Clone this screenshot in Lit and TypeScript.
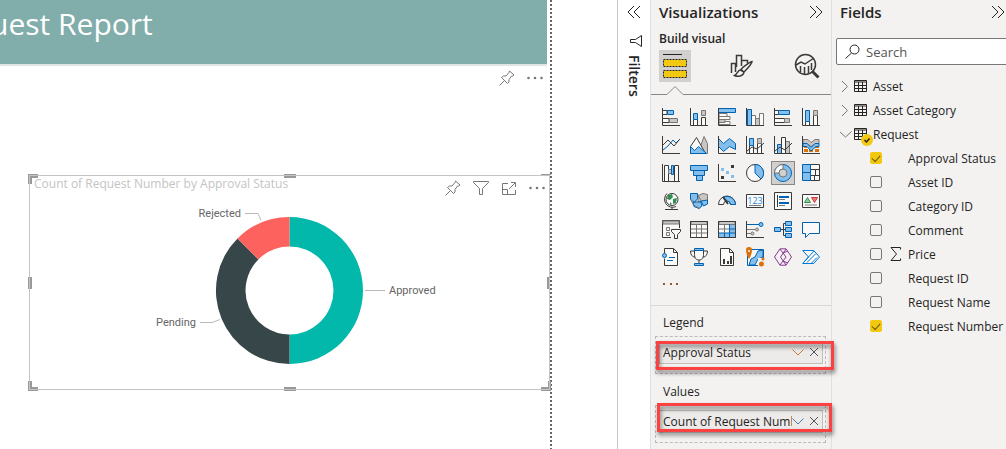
import { LitElement, html, svg, css } from "lit";
import { customElement, property, state } from "lit/decorators.js";
import { classMap } from "lit/directives/class-map.js";

const axes = svg`<path class="k" d="M.5 0V17.5H18"/>`;

/* Gallery glyphs, each drawn in an 18 by 18 box. */
const visuals: { name: string; art: unknown }[] = [
  { name: "Stacked bar chart", art: svg`<path class="w" d="M1 2.5h4v4H1zM1 10.5h6v4H1z"/><path class="k" d="M1 2.5h4v4H1M1 10.5h6v4H1"/><path class="b" d="M5.5 2.5h6v4h-6z"/><path class="g" d="M7.5 10.5h8v4h-8z"/>${axes}` },
  { name: "Stacked column chart", art: svg`<path class="w k" d="M3.5 11.5h4v6h-4zM11.5 9.5h4v8h-4z"/><path class="b" d="M3.5 5.5h4v6h-4z"/><path class="g" d="M11.5 2.5h4v5h-4z"/>${axes}` },
  { name: "Clustered bar chart", art: svg`<path class="w n" d="M1 5.5h8v3H1zM1 8.5h11v3H1zM1 13.5h11v3H1z"/><path class="g" d="M1 11.5h6v3H1z"/><path class="b" d="M.5 .5h17v4H.5z"/>${axes}` },
  { name: "Clustered column chart", art: svg`<path class="w n" d="M5.500 7.500h4v10h-4zM13.500 5.500h4v12h-4z"/><path class="g" d="M9.500 10.500h4v7h-4z"/><path class="b" d="M1.500 1.500h4v16h-4z"/>${axes}` },
  { name: "100% stacked bar chart", art: svg`<path class="w k" d="M.5 2.500h4v4h-4zM.5 10.500h10v4H.5z"/><path class="b" d="M4.500 2.500h11v4h-11z"/><path class="g" d="M10.500 10.500h5v4h-5z"/>${axes}` },
  { name: "100% stacked column chart", art: svg`<path class="w k" d="M3.500 13.500h4v4h-4zM11.500 7.500h4v10h-4z"/><path class="b" d="M3.500 2.500h4v11h-4z"/><path class="g" d="M11.500 2.500h4v5h-4z"/>${axes}` },
  { name: "Line chart", art: svg`<path class="bl" d="M1 14l5-4 5-6 3 3 4-4"/><path class="k" d="M1 9l5-5 6 6 5-6"/>${axes}` },
  { name: "Area chart", art: svg`<path class="g" d="M8 17.500L14 .5l3.500 7v10z"/><path class="w k" d="M.5 10.500l6-9 9 16H.5z"/><path class="b" d="M.5 10.500l4 4 4-4 8 7H.5z"/>` },
  { name: "Stacked area chart", art: svg`<path class="b" d="M.5 2.500l5 5 6-5 6 5v6l-6-3-6 5-5-5z"/>${axes}` },
  { name: "Line and stacked column chart", art: svg`<path class="w k" d="M3.500 9.500h4v8h-4zM11.500 7.500h4v10h-4z"/><path class="b" d="M3.500 2.500h4v7h-4z"/><path class="g" d="M11.500 2.500h4v5h-4z"/><path class="k" d="M1 15l5-4 5 2 7-6"/>${axes}` },
  { name: "Line and clustered column chart", art: svg`<path class="b" d="M3.500 8.500h4v9h-4z"/><path class="g" d="M11.500 5.500h4v12h-4z"/><path class="w k" d="M7.500 1.500h4v16h-4z"/><path class="k" d="M1 15l5-4 5 3 7-7"/>${axes}` },
  { name: "Ribbon chart", art: svg`<path class="o" d="M2 9h3v3H2zM13 9h4v3h-4zM7 12h4v4H7zM2 13h4v3H2zM13 13h4v3h-4z"/><path class="g" d="M1 3.500h5l3 3 4-3h4v4h-3l-5 3-4-3H1z"/><path class="b" d="M1 7.500h4l4 4 4-4h4v3h-3l-5 4.500-4-4.500H1z"/>${axes}` },
  { name: "Waterfall chart", art: svg`<path class="w k" d="M2.500 1.500h4v16h-4zM12.500 1.500h4v16h-4z"/><path class="g" d="M6.500 5.500h3v4h-3z"/><path class="b" d="M9.500 1.500h2v9h-2z"/>${axes}` },
  { name: "Funnel chart", art: svg`<path class="b" d="M.5 1.500h17v5H.5zM3.500 6.500h11v5h-11zM6.500 11.500h6v5h-6z"/>` },
  { name: "Scatter chart", art: svg`<path class="kf" d="M13 1h3v3h-3zM3 12h3v3H3z"/><path class="bf" d="M3 4h3v3H3zM8 7h3v3H8zM13 11h3v3h-3z"/>${axes}` },
  { name: "Pie chart", art: svg`<circle class="w k" cx="9" cy="9" r="8.500"/><path class="b" d="M9 .5V9l6 6A8.500 8.500 0 0 0 9 .5z"/>` },
  { name: "Donut chart", art: svg`<circle class="b" cx="9" cy="9" r="8.500"/><path class="w n" d="M9 .5A8.500 8.500 0 0 0 .5 9H5a4 4 0 0 1 4-4z"/><circle class="hole" cx="9" cy="9" r="4"/>` },
  { name: "Treemap", art: svg`<path class="w k" d="M8.500 .5h9v16h-9zM8.500 5.500h9M13.500 5.500v6M8.500 11.500h9M12.500 11.500v5"/><path class="b" d="M.5 .5h8v8h-8zM.5 8.500h8v8h-8z"/>` },
  { name: "Map", art: svg`<circle class="w k" cx="10" cy="7.500" r="6"/><path class="gr" d="M6 3l4-1 1 3-3 3-3-1zM11 7l4-1-1 5-3 1zM8 10l2 2-2 1z"/><path class="k" d="M5 1.500a8 8 0 0 0 9 13M10 15v2.500M3 17.500h13"/>` },
  { name: "Filled map", art: svg`<path class="g" d="M8 3.500l5-2 4.500 1v7H8z"/><path class="b" d="M.5 1.500h7v5l-3 4-4-3zM11 9l6.500-1v4l-4 2zM3 10h8l1 4-3 2.500-5-2z"/><path class="n" d="M.5 7l3 6 6 3.500M8 3l3 6"/>` },
  { name: "Gauge", art: svg`<path class="w k" d="M.5 12.500a8.500 8.500 0 0 1 17 0h-5a3.500 3.500 0 0 0-7 0z"/><path class="b" d="M5 5.500a8.500 8.500 0 0 1 12.500 7h-5a3.500 3.500 0 0 0-3-3.500z"/><path class="k2" d="M5 5l5 7"/>` },
  { name: "Card", art: svg`<path class="w k" d="M.5 2.500h17v13H.5z"/><text class="digits" x="9" y="11.500">123</text><path class="n" d="M3 13.500h12"/>` },
  { name: "Multi-row card", art: svg`<path class="w k" d="M.5 .5h17v17H.5z"/><path class="k" d="M3.500 3v12"/><path class="b2" d="M5 5h10M5 11h10"/><path class="n" d="M5 7.500h6M5 13.500h6"/>` },
  { name: "KPI", art: svg`<path class="w k" d="M.5 2.500h17v13H.5z"/><path class="grl" d="M2.500 10.500l3-5 3 5z"/><path class="rd" d="M9.500 5.500h6l-3 5z"/><path class="n" d="M3 13h12"/>` },
  { name: "Slicer", art: svg`<path class="w k" d="M.5 .5h17v17H.5z"/><path class="g" d="M1 1h16v3H1z"/><path class="n" d="M4.500 7.500h3v3h-3zM4.500 12.500h3v3h-3z"/><path class="clear" d="M9 8h10v10H9z"/><path class="w k" d="M9.500 9.500h9v2l-3 3v4h-3v-4l-3-3z"/>` },
  { name: "Table", art: svg`<path class="w k" d="M.5 1.500h17v16H.5z"/><path class="g" d="M1 1.500h16v3H1z"/><path class="n" d="M6.500 4v13M11.500 4v13M1 9h16M1 13h16"/><path class="k" d="M.5 1.500h17v16H.5z"/>` },
  { name: "Matrix", art: svg`<path class="w k" d="M.5 1.500h17v16H.5z"/><path class="bf" d="M12 5h5v12H1v-4h11z"/><path class="g" d="M1 1.500h16v3H1z"/><path class="bl" d="M6.500 13v4M11.500 4v13M11.500 9H17M1 13h16"/><path class="n" d="M6.500 4v9M1 9h10"/><path class="k" d="M.5 1.500h17v16H.5z"/>` },
  { name: "R script visual", art: svg`<path class="bl" d="M1 4.500h12"/><circle class="b" cx="15" cy="4.500" r="2"/><path class="n" d="M1 9.500h9M1 13.500h4"/><circle class="g" cx="11" cy="9.500" r="1.500"/><circle class="g" cx="6.500" cy="13.500" r="1.500"/><path class="k" d="M.5 1v16.500H18"/>` },
  { name: "Decomposition tree", art: svg`<path class="k" d="M6 9.500h6M12 3.500H9.500v12H12"/><path class="b" d="M.5 7.500h6v4h-6zM11.500 1.500h6v4h-6zM11.500 7.500h6v4h-6zM11.500 13.500h6v4h-6z"/>` },
  { name: "Q and A", art: svg`<path class="w bl" d="M.5 2.500h17v11h-10l-4 4v-4h-3z"/>` },
  { name: "Narrative", art: svg`<path class="w k" d="M2.500 5V.5h9l4 4v13h-13v-7M11.500 .5v4h4"/><path class="bl" d="M7 9.500h6M5 12.500h6"/><circle class="b" cx="2.500" cy="7.500" r="2"/>` },
  { name: "Goals", art: svg`<path class="w k" d="M4.500 1.500h9v5c0 4-2 5.500-4.500 5.500S4.500 10.500 4.500 6.500zM4.500 3h-4c0 4 2 6 4.500 6M13.500 3h4c0 4-2 6-4.500 6M9 12v3"/><path class="b" d="M4.500 .5h9v2h-9zM4.500 15.500h9v2h-9z"/>` },
  { name: "Paginated report", art: svg`<path class="w k" d="M2.500 .5h9l4 4v13h-13zM11.500 .5v4h4"/><path class="kf" d="M5 11h2v5H5zM9 13h2v3H9zM12 8h2v8h-2z"/>` },
  { name: "ArcGIS map", art: svg`<path class="w bl" d="M1.500 1.500h16v16h-16z"/><path class="b" d="M3 17l2-6 4-2 3-6 5-1v7l-5 2-3 6z"/><path class="clear" d="M12 10h7v9h-7z"/><path class="o" d="M0 2a3 3 0 0 1 6 0c0 3-1 6-3 9C1 8 0 5 0 2z"/><circle class="o" cx="15.500" cy="16" r="2.500"/><circle class="o" cx="17" cy="11" r="1.500"/><circle class="w" cx="3" cy="3" r="1"/>` },
  { name: "Power Apps", art: svg`<path class="pu" d="M6 .8h6L17.500 9 12 17.200H6L.5 9zM6 1l6 8-6 8M12 1L6.500 9 12 17M9 5l5-2M9 13l5 2"/>` },
  { name: "Power Automate", art: svg`<path class="w bl2" d="M.7 2.500h11L17.500 9l-5.800 6.500H.7L6.500 9z"/><path class="bl2" d="M5 14.500l9-9M2 14l10-11M9 15.500l6-6"/>` },
];

const chevronPair = (flip: boolean) => html`<svg class="glyph" width="14" height="14" viewBox="0 0 14 14" aria-hidden="true">
  <path d=${flip ? "M7 1L1 7l6 6M13 1L7 7l6 6" : "M1 1l6 6-6 6M7 1l6 6-6 6"} /></svg>`;
const pin = html`<svg class="glyph" width="16" height="16" viewBox="0 0 16 16" aria-hidden="true">
  <path d="M.5 15.500l5-5M10.500 1l4.500 4-1.500 1h-1L10 9.500v2.500l-1.500 1.500-6-6L4.500 6H7l3-3.500z" /></svg>`;
const dots = html`<svg class="dots" width="16" height="16" viewBox="0 0 16 16" aria-hidden="true">
  <circle cx="1.500" cy="8" r="1.300" /><circle cx="8" cy="8" r="1.300" /><circle cx="14.500" cy="8" r="1.300" /></svg>`;

const base = css`
  :host { box-sizing: border-box; display: block; }
  *, *::before, *::after { box-sizing: border-box; }
  h1, h2, h3, ul { margin: 0; padding: 0; font-weight: 400; }
  ul { list-style: none; }
  button { appearance: none; border: 0; margin: 0; padding: 0; background: none; font: inherit; color: inherit; display: grid; place-items: center; }
  svg { display: block; }
  .glyph { fill: none; stroke: currentColor; }
`;

@customElement("report-canvas")
class ReportCanvas extends LitElement {
  static styles = [base, css`
    :host { padding-right: 65px; background: #fff; min-width: 0; }
    .page { height: 100%; padding-right: 5px; position: relative;
      background: repeating-linear-gradient(#666 0 2px, #fff 2px 4px) right / 2px 100% no-repeat; }
    .banner { height: 66px; background: #81adaa; border-bottom: 2px solid #dfe6e5; color: #fff; overflow: hidden; }
    .banner h1 { font-size: 30px; line-height: 48px; margin-left: -10px; white-space: nowrap; }
    .tools { display: flex; justify-content: flex-end; align-items: flex-start; gap: 12px; color: #777; }
    .tools.outer { padding: 4px 4px 0 0; height: 109px; }
    .dots { fill: #777; }
    .visual { position: relative; margin: 0 -3px 0 29px; height: 215px; border: 1px solid #c4c4c4; }
    .head { display: flex; justify-content: space-between; height: 30px; padding-left: 4px; }
    .head h2 { font-size: 12px; line-height: 16px; color: #c4c4c4; white-space: nowrap; }
    .head .tools { padding: 4px 4px 0 0; }
    .chart { margin: 0 auto; }
    .chart text { font: 11px Roboto, sans-serif; fill: #666; }
    .lead { fill: none; stroke: #b8b8b8; }
    .teal { fill: #01b8aa; } .slate { fill: #374649; } .coral { fill: #fd625e; }
    .grip { position: absolute; border: 0 solid #999; }
    .tl { left: -2px; top: -2px; } .tr { right: -2px; top: -2px; } .bl { left: -2px; bottom: -2px; } .br { right: -2px; bottom: -2px; }
    .tl, .bl, .br, .tr { width: 10px; height: 10px; }
    .tl { border-width: 4px 0 0 4px; } .tr { border-width: 1px 0 0 0; } .bl { border-width: 0 0 4px 4px; } .br { border-width: 0 3px 4px 0; }
    .t, .b { left: calc(50% - 6px); width: 12px; border-top-width: 4px; } .t { top: -2px; } .b { bottom: -2px; }
    .l, .r { top: calc(50% - 6px); height: 12px; border-left-width: 4px; } .l { left: -2px; } .r { right: -1px; border-left-width: 3px; }
    .visual::after { content: ""; position: absolute; inset: -1px; border: 1px solid #c4c4c4; pointer-events: none; }
  `];

  render() {
    return html`<div class="page">
      <header class="banner"><h1>uest Report</h1></header>
      <div class="tools outer">
        <button aria-label="Pin visual">${pin}</button>
        <button aria-label="More options">${dots}</button>
      </div>
      <section class="visual">
        <div class="head">
          <h2>Count of Request Number by Approval Status</h2>
          <div class="tools">
            <button aria-label="Pin visual">${pin}</button>
            <button aria-label="Filters on visual"><svg class="glyph" width="16" height="16" viewBox="0 0 16 16"><path d="M.5 1.500h15v1l-6 6v6h-3v-6l-6-6z" /></svg></button>
            <button aria-label="Focus mode"><svg class="glyph" width="16" height="16" viewBox="0 0 16 16"><path d="M7 3.500H1.500v11h13V10M1.500 9.500h5v5M8 9l6-6M10 2.500h4.500V7" /></svg></button>
            <button aria-label="More options">${dots}</button>
          </div>
        </div>
        <svg class="chart" width="299" height="165" viewBox="0 -5 299 165" role="img" aria-label="Count of Request Number by Approval Status">
          <path class="teal" d="M149.500 6A73.500 73.500 0 0 1 149.500 153V123.500A44 44 0 0 0 149.500 35.500z" />
          <path class="slate" d="M149.500 153A73.500 73.500 0 0 1 97.500 27.500L118.400 48.400A44 44 0 0 0 149.500 123.500z" />
          <path class="coral" d="M97.500 27.500A73.500 73.500 0 0 1 149.500 6V35.500A44 44 0 0 0 118.400 48.400z" />
          <path class="lead" d="M105 2.500h13l3 7M60 111.500h12l8-3M225 79.500h20" />
          <text x="101" y="6" text-anchor="end">Rejected</text>
          <text x="56" y="115" text-anchor="end">Pending</text>
          <text x="249" y="83">Approved</text>
        </svg>
        ${["tl", "tr", "bl", "br", "t", "b", "l", "r"].map((side) => html`<span class="grip ${side}"></span>`)}
      </section>
    </div>`;
  }
}

@customElement("filters-strip")
class FiltersStrip extends LitElement {
  static styles = [base, css`
    :host { background: #fff; border-left: 1px solid #c8c6c4; color: #252423; }
    .strip { display: flex; flex-direction: column; align-items: center; padding-top: 5px; }
    .funnel { margin: 15px 0 0 4px; }
    h2 { writing-mode: vertical-rl; font-size: 14px; line-height: 20px; font-weight: 600; margin-top: 7px; }
  `];

  render() {
    return html`<div class="strip">
      <button aria-label="Expand filters">${chevronPair(true)}</button>
      <svg class="glyph funnel" width="14" height="14" viewBox="0 0 14 14" aria-hidden="true"><path d="M12.500 1.500v11l-6-4H1.500v-3h5z" /></svg>
      <h2>Filters</h2>
    </div>`;
  }
}

@customElement("field-well")
class FieldWell extends LitElement {
  @property() label = "";
  @property() value = "";
  @property({ type: Boolean }) warm = false;

  static styles = [base, css`
    :host { color: #252423; min-width: 0; }
    h3 { font-size: 12px; line-height: 18px; padding-left: 8px; }
    .drop { position: relative; margin-top: 4px; height: 38px; padding: 4px 2px 4px 3px; border: 1px dashed #bbb; }
    .chip { display: flex; align-items: center; height: 23px; padding: 0 0 1px 3px; border: 1px solid #c0bebc; background: #edebe9; font-size: 12px; }
    .name { flex: 1; min-width: 0; overflow: hidden; white-space: nowrap; }
    .glyph { stroke: #555; }
    .warm .arrow { stroke: #c77a2e; }
    .arrow { stroke: #4a7ba8; }
    .cross { margin: 0 3px 0 5px; }
    .mark { position: absolute; inset: 4px -9px 3px 0; border: 3px solid #fb4141; filter: drop-shadow(1px 3px 2px #0008); pointer-events: none; }
    .low { inset: -3px -7px 10px 1px; }
  `];

  render() {
    return html`<h3>${this.label}</h3>
      <div class=${classMap({ drop: true, warm: this.warm })}>
        <div class="chip">
          <span class="name">${this.value}</span>
          <button aria-label="Field options"><svg class="glyph arrow" width="12" height="12" viewBox="0 0 12 12"><path d="M.5 3.500L6 9l5.500-5.500" /></svg></button>
          <button class="cross" aria-label="Remove field"><svg class="glyph" width="10" height="10" viewBox="0 0 10 10"><path d="M1 1l8 8M9 1L1 9" /></svg></button>
        </div>
        <div class=${classMap({ mark: true, low: !this.warm })}></div>
      </div>`;
  }
}

@customElement("visualizations-pane")
class VisualizationsPane extends LitElement {
  @state() private chosen = "Donut chart";

  static styles = [base, css`
    :host { background: #f3f2f1; border-left: 1px solid #e1dfdd; color: #252423; }
    .top { display: flex; justify-content: space-between; align-items: center; height: 24px; padding: 0 8px; }
    .top h2 { font-size: 15px; font-weight: 600; }
    .sub { font-size: 12px; line-height: 18px; font-weight: 600; padding: 6px 8px 0; }
    .modes { display: flex; justify-content: space-between; padding: 2px 8px 0; }
    .modes button { width: 32px; height: 32px; }
    .modes .on { background: #d2d0ce; }
    .notch { display: flex; height: 13px; }
    .notch::after { content: ""; flex: 1; border-bottom: 1px solid #8a8886; }
    .notch svg { fill: none; stroke: #8a8886; }
    .gallery { display: grid; grid-template-columns: repeat(6, 24px); gap: 4px; padding: 10px 8px 0; }
    .gallery button { width: 24px; height: 24px; }
    .gallery .picked { background: #d2d0ce; outline: 1px solid #8a8886; outline-offset: -1px; }
    .gallery svg { overflow: visible; fill: none; }
    .more { margin: 7px 0 0 12px; }
    .more svg { fill: #8a5a36; }
    .wells { display: grid; grid-template-columns: minmax(0, 1fr); gap: 9px; margin-top: 13px; padding: 8px 5px 0 4px; border-top: 1px solid #d8d6d4; }
    .k { stroke: #3b3a39; } .k2 { stroke: #3b3a39; stroke-width: 2; } .kf { fill: #3b3a39; }
    .w { fill: #fafafa; } .n { stroke: #797775; } .g { fill: #c8c6c4; stroke: #797775; }
    .b { fill: #83beec; stroke: #0063b1; } .bf { fill: #83beec; } .bl { stroke: #0063b1; } .b2 { stroke: #0063b1; stroke-width: 2; }
    .bl2 { stroke: #0078d4; } .o { fill: #d9700a; } .pu { stroke: #8a3a96; } .hole { fill: #d2d0ce; stroke: #797775; }
    .gr { fill: #2f8f4e; } .grl { fill: #8ccf9d; stroke: #3a8a4e; } .rd { fill: #f08080; stroke: #d13438; } .clear { fill: #f3f2f1; }
    .digits { font: 9px "Open Sans", sans-serif; fill: #2b88d8; text-anchor: middle; }
    .brush { fill: #f3f2f1; stroke: #3b3a39; }
  `];

  render() {
    return html`
      <div class="top"><h2>Visualizations</h2><button aria-label="Collapse pane">${chevronPair(false)}</button></div>
      <h3 class="sub">Build visual</h3>
      <div class="modes">
        <button class="on" aria-label="Build visual"><svg width="24" height="26" viewBox="0 0 24 26" fill="#f2c811" stroke="#252423">
          <path d="M0 1.500h19" /><path stroke-dasharray="2 1" d="M.5 6.500h23v7H.5zM.5 17.500h23v7H.5z" /></svg></button>
        <button aria-label="Format visual"><svg class="brush" width="24" height="24" viewBox="0 0 24 24">
          <path d="M2.500 19v-9.500h4V18M7.500 13v-11.500h5V12M12.500 6.500h6v3" stroke-width="1.500" /><path d="M23 7.500c-1 0-9 5-11 8l3 2.500c3-3 8-9 8-10.500zM11.500 16c-3 0-3 4-6 5.500 3 1.500 9 1 9.500-3.500z" stroke-width="1.500" /></svg></button>
        <button aria-label="Analytics"><svg width="26" height="26" viewBox="0 0 26 26" fill="none" stroke="#3b3a39">
          <circle cx="11.500" cy="11.500" r="10" stroke-width="1.500" /><path d="M2 12l5-3 4 2 9-6M6.500 13v6M10.500 14v7M14.500 13v7.500M17.500 10v7" stroke-width="1.500" /><path d="M18 18l6.500 6.500" stroke-width="3" /></svg></button>
      </div>
      <div class="notch"><svg width="32" height="13" viewBox="0 0 32 13"><path d="M0 12.500h16l8-8 8 8" /></svg></div>
      <div class="gallery">
        ${visuals.map((v) => html`<button class=${classMap({ picked: v.name === this.chosen })} aria-label=${v.name} @click=${() => (this.chosen = v.name)}>
          <svg width="18" height="18" viewBox="0 0 18 18">${v.art}</svg></button>`)}
      </div>
      <button class="more" aria-label="Get more visuals"><svg width="16" height="16" viewBox="0 0 16 16"><path d="M0 7h2v2H0zM7 7h2v2H7zM13 7h2v2h-2z" /></svg></button>
      <div class="wells">
        <field-well label="Legend" value="Approval Status" warm></field-well>
        <field-well label="Values" value="Count of Request Number"></field-well>
      </div>`;
  }
}

@customElement("fields-pane")
class FieldsPane extends LitElement {
  private tables = [
    { name: "Asset", open: false },
    { name: "Asset Category", open: false },
    { name: "Request", open: true },
  ];
  private fields = [
    { name: "Approval Status", on: true },
    { name: "Asset ID" },
    { name: "Category ID" },
    { name: "Comment" },
    { name: "Price", sum: true },
    { name: "Request ID" },
    { name: "Request Name" },
    { name: "Request Number", on: true },
  ] as { name: string; on?: boolean; sum?: boolean }[];

  static styles = [base, css`
    :host { background: #f3f2f1; border-left: 1px solid #e1dfdd; color: #252423; overflow: hidden; }
    .top { display: flex; justify-content: space-between; align-items: center; height: 24px; padding: 0 1px 0 8px; }
    .top h2 { font-size: 15px; font-weight: 600; }
    .search { display: flex; align-items: center; gap: 6px; height: 27px; margin: 14px -4px 9px 4px; padding-left: 8px; border: 1px solid #777; border-radius: 2px; background: #fff; }
    .search input { flex: 1; min-width: 0; border: 0; padding: 0; outline: 0; background: none; font: inherit; font-size: 13px; color: #252423; }
    .search input::placeholder { color: #555; opacity: 1; }
    .row { display: flex; align-items: center; height: 24px; width: 100%; font-size: 12px; white-space: nowrap; }
    .table { padding-left: 8px; }
    .arrow { width: 14px; height: 14px; stroke: #777; }
    .grid { position: relative; margin-right: 6px; }
    .open .badge { display: block; }
    .badge { display: none; position: absolute; left: 7px; top: 6px; }
    .field { padding-left: 38px; }
    input[type="checkbox"] { appearance: none; display: grid; place-items: center; flex: none; width: 12px; height: 12px; margin: 0; border: 1px solid #777; border-radius: 2px; }
    input[type="checkbox"]:checked { background: #f2c811; border-color: #f2c811; }
    input[type="checkbox"]:checked::before { content: ""; width: 8px; height: 5px; margin-top: -2px; border: solid #6b5a10; border-width: 0 0 1px 1px; transform: rotate(-48deg); }
    .kind { width: 26px; padding-left: 8px; }
  `];

  render() {
    return html`
      <div class="top"><h2>Fields</h2><button aria-label="Collapse pane">${chevronPair(false)}</button></div>
      <div class="search">
        <svg class="glyph" width="15" height="15" viewBox="0 0 15 15" aria-hidden="true"><circle cx="9.500" cy="5.500" r="4.500" /><path d="M6.500 9L.5 14.500" /></svg>
        <input type="search" placeholder="Search" aria-label="Search fields" />
      </div>
      <ul>
        ${this.tables.map((t) => html`<li><button class=${classMap({ row: true, table: true, open: t.open })} aria-expanded=${t.open}>
          <svg class="glyph arrow" viewBox="0 0 14 14"><path d=${t.open ? "M-.5 4.500L5.500 10l6-5.500" : "M2 2l5.500 5.500L2 13"} /></svg>
          <span class="grid"><svg class="glyph" width="13" height="12" viewBox="0 0 13 12"><path d="M.5 .5h12v11H.5zM.5 2h12M.5 5.500h12M.5 8.500h12M4.500 2v9M8.500 2v9" /></svg>
            <svg class="badge" width="12" height="12" viewBox="0 0 12 12"><circle cx="6" cy="6" r="6" fill="#f2c811" /><path d="M3.500 6l2 2 3-3.500" fill="none" stroke="#252423" stroke-width="1.500" /></svg></span>
          <span>${t.name}</span></button></li>`)}
        ${this.fields.map((f) => html`<li><label class="row field">
          <input type="checkbox" .checked=${!!f.on} />
          <span class="kind">${f.sum ? html`<svg class="glyph" width="11" height="14" viewBox="0 0 11 14"><path d="M10.500 2.500V.5H1L6.500 7 1 13.500h9.500v-2" /></svg>` : ""}</span>
          <span>${f.name}</span></label></li>`)}
      </ul>`;
  }
}

@customElement("app-root")
class AppRoot extends LitElement {
  static styles = css`
    :host { display: grid; grid-template-columns: minmax(0, 1fr) 33px 181px 175px; min-height: 100vh; overflow: hidden; font-family: "Open Sans", "Noto Sans", sans-serif; }
  `;

  render() {
    return html`<report-canvas></report-canvas><filters-strip></filters-strip><visualizations-pane></visualizations-pane><fields-pane></fields-pane>`;
  }
}
